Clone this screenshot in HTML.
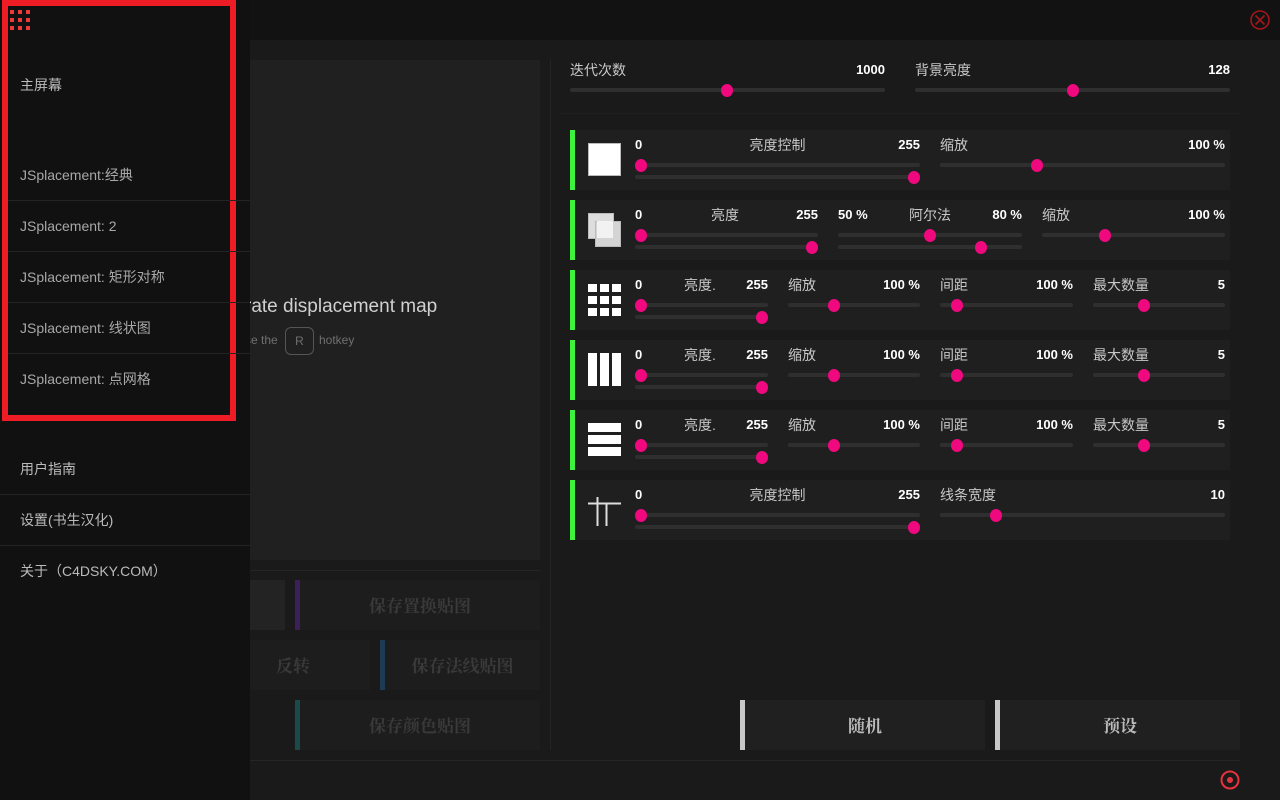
<!DOCTYPE html>
<html><head><meta charset="utf-8"><style>
*{margin:0;padding:0;box-sizing:border-box}
body{width:1280px;height:800px;background:#1a1a1a;position:relative;overflow:hidden;font-family:"Liberation Sans","Noto Sans CJK SC",sans-serif}
div,span{position:absolute}
.t{height:4px;background:#2f2f2f;border-radius:2px}
.k{width:12px;height:13px;border-radius:50%;background:#f0087f;margin-left:-6px;margin-top:-5px}
.lb{color:#c8c8c8;font-size:14px;line-height:16px;white-space:nowrap}
.v{color:#fff;font-size:13px;font-weight:bold;line-height:16px;white-space:nowrap}
.row{left:570px;width:660px;height:60px;background:#1f1f1f;border-left:5px solid #3ef23e}
.si{left:20px;color:#a8a8a8;font-size:14px;line-height:16px;white-space:nowrap}
.sep{left:8px;width:242px;height:1px;background:#242424}
.btn{background:#1d1d1d;color:#3a3a3a;font-family:"Noto Serif CJK SC",serif;font-weight:bold;font-size:17px;text-align:center;line-height:50px;height:50px}
</style></head><body>
<div style="left:0;top:0;width:1280px;height:40px;background:#121212"></div>
<svg style="position:absolute;left:1249px;top:9px" width="22" height="22"><circle cx="11" cy="11" r="9" fill="none" stroke="#a3161c" stroke-width="1.6"/><path d="M6.5 6.5L15.5 15.5M15.5 6.5L6.5 15.5" stroke="#a3161c" stroke-width="1.6"/></svg>

<div style="left:233px;top:60px;width:307px;height:500px;background:#202020"></div>
<div style="left:245px;top:296px;color:#d0d0d0;font-size:19px;white-space:nowrap">rate displacement map</div>
<div style="left:245px;top:333px;color:#707070;font-size:12px;white-space:nowrap">se the</div>
<div style="left:285px;top:327px;width:29px;height:28px;border:1px solid #555;border-radius:6px;color:#707070;font-size:12px;text-align:center;line-height:26px">R</div>
<div style="left:319px;top:333px;color:#707070;font-size:12px;white-space:nowrap">hotkey</div>
<div style="left:250px;top:570px;width:290px;height:1px;background:#252525"></div>
<div style="left:550px;top:60px;width:1px;height:690px;background:#252525"></div>
<div style="left:250px;top:760px;width:990px;height:1px;background:#262626"></div>

<div style="left:250px;top:580px;width:35px;height:50px;background:#232323"></div>
<div style="left:295px;top:580px;width:5px;height:50px;background:#3d1f5a"></div>
<div class="btn" style="left:300px;top:580px;width:240px">保存置换贴图</div>
<div class="btn" style="left:250px;top:640px;width:120px;text-align:left;padding-left:26px">反转</div>
<div style="left:380px;top:640px;width:5px;height:50px;background:#1e3a57"></div>
<div class="btn" style="left:385px;top:640px;width:155px">保存法线贴图</div>
<div style="left:295px;top:700px;width:5px;height:50px;background:#1b4a4a"></div>
<div class="btn" style="left:300px;top:700px;width:240px">保存颜色贴图</div>

<div class="lb" style="left:570px;top:62px">迭代次数</div>
<div class="v" style="left:800px;width:85px;text-align:right;top:62px">1000</div>
<div class="t" style="left:570px;top:88px;width:315px"></div><div class="k" style="left:727px;top:89px"></div>
<div class="lb" style="left:915px;top:62px">背景亮度</div>
<div class="v" style="left:1150px;width:80px;text-align:right;top:62px">128</div>
<div class="t" style="left:915px;top:88px;width:315px"></div><div class="k" style="left:1073px;top:89px"></div>
<div style="left:560px;top:113px;width:680px;height:1px;background:#202020"></div>

<div class="row" style="top:130px"></div>
<div style="left:588px;top:143px;width:33px;height:33px;background:#fff;border:1px solid #bbb"></div>
<div class="v" style="left:635px;top:137px">0</div>
<div class="lb" style="left:735px;width:85px;text-align:center;top:137px">亮度控制</div>
<div class="v" style="left:850px;width:70px;text-align:right;top:137px">255</div>
<div class="t" style="left:635px;top:163px;width:285px"></div><div class="k" style="left:641px;top:164px"></div>
<div class="t" style="left:635px;top:175px;width:285px"></div><div class="k" style="left:914px;top:176px"></div>
<div class="lb" style="left:940px;top:137px">缩放</div>
<div class="v" style="left:1150px;width:75px;text-align:right;top:137px">100 %</div>
<div class="t" style="left:940px;top:163px;width:285px"></div><div class="k" style="left:1037px;top:164px"></div>

<div class="row" style="top:200px"></div>
<div style="left:588px;top:213px;width:26px;height:26px;background:#ddd;border:1px solid #bbb"></div>
<div style="left:595px;top:221px;width:26px;height:26px;background:#d4d4d4;border:1px solid #bbb"></div>
<div style="left:597px;top:221px;width:16px;height:17px;background:#f2f2f2"></div>
<div class="v" style="left:635px;top:207px">0</div>
<div class="lb" style="left:700px;width:50px;text-align:center;top:207px">亮度</div>
<div class="v" style="left:760px;width:58px;text-align:right;top:207px">255</div>
<div class="t" style="left:635px;top:233px;width:183px"></div><div class="k" style="left:641px;top:234px"></div>
<div class="t" style="left:635px;top:245px;width:183px"></div><div class="k" style="left:812px;top:246px"></div>
<div class="v" style="left:838px;top:207px">50 %</div>
<div class="lb" style="left:900px;width:60px;text-align:center;top:207px">阿尔法</div>
<div class="v" style="left:960px;width:62px;text-align:right;top:207px">80 %</div>
<div class="t" style="left:838px;top:233px;width:184px"></div><div class="k" style="left:930px;top:234px"></div>
<div class="t" style="left:838px;top:245px;width:184px"></div><div class="k" style="left:981px;top:246px"></div>
<div class="lb" style="left:1042px;top:207px">缩放</div>
<div class="v" style="left:1150px;width:75px;text-align:right;top:207px">100 %</div>
<div class="t" style="left:1042px;top:233px;width:183px"></div><div class="k" style="left:1105px;top:234px"></div>

<div class="row" style="top:270px"></div>
<div class="row" style="top:340px"></div>
<div class="row" style="top:410px"></div>
<svg style="position:absolute;left:588px;top:284px" width="34" height="34" fill="#fff"><rect x="0" y="0" width="9" height="8"/><rect x="12" y="0" width="9" height="8"/><rect x="24" y="0" width="9" height="8"/><rect x="0" y="12" width="9" height="8"/><rect x="12" y="12" width="9" height="8"/><rect x="24" y="12" width="9" height="8"/><rect x="0" y="24" width="9" height="8"/><rect x="12" y="24" width="9" height="8"/><rect x="24" y="24" width="9" height="8"/></svg>
<svg style="position:absolute;left:588px;top:353px" width="34" height="34" fill="#fff"><rect x="0" y="0" width="9" height="33"/><rect x="12" y="0" width="9" height="33"/><rect x="24" y="0" width="9" height="33"/></svg>
<svg style="position:absolute;left:588px;top:423px" width="34" height="34" fill="#fff"><rect x="0" y="0" width="33" height="9"/><rect x="0" y="12" width="33" height="9"/><rect x="0" y="24" width="33" height="9"/></svg>

<div class="v" style="left:635px;top:277px">0</div><div class="lb" style="left:684px;top:277px">亮度.</div><div class="v" style="left:718px;width:50px;text-align:right;top:277px">255</div>
<div class="t" style="left:635px;top:303px;width:133px"></div><div class="k" style="left:641px;top:304px"></div>
<div class="t" style="left:635px;top:315px;width:133px"></div><div class="k" style="left:762px;top:316px"></div>
<div class="lb" style="left:788px;top:277px">缩放</div><div class="v" style="left:850px;width:70px;text-align:right;top:277px">100 %</div>
<div class="t" style="left:788px;top:303px;width:132px"></div><div class="k" style="left:834px;top:304px"></div>
<div class="lb" style="left:940px;top:277px">间距</div><div class="v" style="left:1000px;width:73px;text-align:right;top:277px">100 %</div>
<div class="t" style="left:940px;top:303px;width:133px"></div><div class="k" style="left:957px;top:304px"></div>
<div class="lb" style="left:1093px;top:277px">最大数量</div><div class="v" style="left:1180px;width:45px;text-align:right;top:277px">5</div>
<div class="t" style="left:1093px;top:303px;width:132px"></div><div class="k" style="left:1144px;top:304px"></div>

<div class="v" style="left:635px;top:347px">0</div><div class="lb" style="left:684px;top:347px">亮度.</div><div class="v" style="left:718px;width:50px;text-align:right;top:347px">255</div>
<div class="t" style="left:635px;top:373px;width:133px"></div><div class="k" style="left:641px;top:374px"></div>
<div class="t" style="left:635px;top:385px;width:133px"></div><div class="k" style="left:762px;top:386px"></div>
<div class="lb" style="left:788px;top:347px">缩放</div><div class="v" style="left:850px;width:70px;text-align:right;top:347px">100 %</div>
<div class="t" style="left:788px;top:373px;width:132px"></div><div class="k" style="left:834px;top:374px"></div>
<div class="lb" style="left:940px;top:347px">间距</div><div class="v" style="left:1000px;width:73px;text-align:right;top:347px">100 %</div>
<div class="t" style="left:940px;top:373px;width:133px"></div><div class="k" style="left:957px;top:374px"></div>
<div class="lb" style="left:1093px;top:347px">最大数量</div><div class="v" style="left:1180px;width:45px;text-align:right;top:347px">5</div>
<div class="t" style="left:1093px;top:373px;width:132px"></div><div class="k" style="left:1144px;top:374px"></div>

<div class="v" style="left:635px;top:417px">0</div><div class="lb" style="left:684px;top:417px">亮度.</div><div class="v" style="left:718px;width:50px;text-align:right;top:417px">255</div>
<div class="t" style="left:635px;top:443px;width:133px"></div><div class="k" style="left:641px;top:444px"></div>
<div class="t" style="left:635px;top:455px;width:133px"></div><div class="k" style="left:762px;top:456px"></div>
<div class="lb" style="left:788px;top:417px">缩放</div><div class="v" style="left:850px;width:70px;text-align:right;top:417px">100 %</div>
<div class="t" style="left:788px;top:443px;width:132px"></div><div class="k" style="left:834px;top:444px"></div>
<div class="lb" style="left:940px;top:417px">间距</div><div class="v" style="left:1000px;width:73px;text-align:right;top:417px">100 %</div>
<div class="t" style="left:940px;top:443px;width:133px"></div><div class="k" style="left:957px;top:444px"></div>
<div class="lb" style="left:1093px;top:417px">最大数量</div><div class="v" style="left:1180px;width:45px;text-align:right;top:417px">5</div>
<div class="t" style="left:1093px;top:443px;width:132px"></div><div class="k" style="left:1144px;top:444px"></div>

<div class="row" style="top:480px"></div>
<svg style="position:absolute;left:588px;top:493px" width="34" height="34"><path d="M0 10.5H33M9.5 4V33M18.5 10V33" stroke="#ddd" stroke-width="2" fill="none"/></svg>
<div class="v" style="left:635px;top:487px">0</div>
<div class="lb" style="left:735px;width:85px;text-align:center;top:487px">亮度控制</div>
<div class="v" style="left:850px;width:70px;text-align:right;top:487px">255</div>
<div class="t" style="left:635px;top:513px;width:285px"></div><div class="k" style="left:641px;top:514px"></div>
<div class="t" style="left:635px;top:525px;width:285px"></div><div class="k" style="left:914px;top:526px"></div>
<div class="lb" style="left:940px;top:487px">线条宽度</div>
<div class="v" style="left:1150px;width:75px;text-align:right;top:487px">10</div>
<div class="t" style="left:940px;top:513px;width:285px"></div><div class="k" style="left:996px;top:514px"></div>

<div style="left:740px;top:700px;width:245px;height:50px;background:#202020;border-left:5px solid #c8c8c8;color:#bbb;font-family:'Noto Serif CJK SC',serif;font-weight:bold;font-size:17px;text-align:center;line-height:50px">随机</div>
<div style="left:995px;top:700px;width:245px;height:50px;background:#202020;border-left:5px solid #c8c8c8;color:#bbb;font-family:'Noto Serif CJK SC',serif;font-weight:bold;font-size:17px;text-align:center;line-height:50px">预设</div>
<svg style="position:absolute;left:1219px;top:769px" width="22" height="22"><circle cx="11" cy="11" r="8.5" fill="none" stroke="#e8323c" stroke-width="2"/><circle cx="11" cy="11" r="3" fill="#e8323c"/></svg>

<div style="left:0;top:0;width:250px;height:800px;background:#111"></div>
<div style="left:2px;top:0;width:234px;height:421px;border:6px solid #ee1c25"></div>
<svg style="position:absolute;left:10px;top:10px" width="22" height="22" fill="#ee3a3a"><rect x="0" y="0" width="4" height="4"/><rect x="8" y="0" width="4" height="4"/><rect x="16" y="0" width="4" height="4"/><rect x="0" y="8" width="4" height="4"/><rect x="8" y="8" width="4" height="4"/><rect x="16" y="8" width="4" height="4"/><rect x="0" y="16" width="4" height="4"/><rect x="8" y="16" width="4" height="4"/><rect x="16" y="16" width="4" height="4"/></svg>
<div class="si" style="top:77px;color:#bbb">主屏幕</div>
<div class="si" style="top:167px">JSplacement:经典</div>
<div class="sep" style="top:200px"></div>
<div class="si" style="top:218px">JSplacement: 2</div>
<div class="sep" style="top:251px"></div>
<div class="si" style="top:269px">JSplacement: 矩形对称</div>
<div class="sep" style="top:302px"></div>
<div class="si" style="top:320px">JSplacement: 线状图</div>
<div class="sep" style="top:353px"></div>
<div class="si" style="top:371px">JSplacement: 点网格</div>
<div class="si" style="top:461px;color:#bbb">用户指南</div>
<div class="sep" style="top:494px;left:0;width:250px"></div>
<div class="si" style="top:512px;color:#bbb">设置(书生汉化)</div>
<div class="sep" style="top:545px;left:0;width:250px"></div>
<div class="si" style="top:563px;color:#bbb">关于（C4DSKY.COM）</div>
</body></html>
